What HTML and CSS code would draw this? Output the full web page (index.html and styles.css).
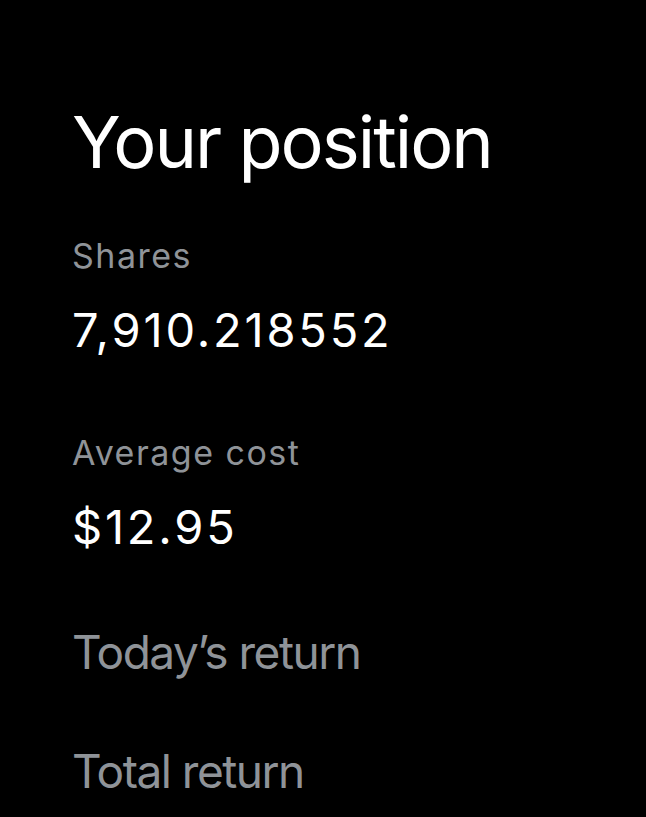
FILE: index.html
```html
<!DOCTYPE html>
<html lang="en">
<head>
<meta charset="utf-8">
<title>Your position</title>
<link rel="stylesheet" href="styles.css">
</head>
<body>
<main class="position">
  <h1 class="title">Your position</h1>
  <section class="stat">
    <div class="stat-label">Shares</div>
    <div class="stat-value">7,910.218552</div>
  </section>
  <section class="stat">
    <div class="stat-label">Average cost</div>
    <div class="stat-value">$12.95</div>
  </section>
  <div class="row row-today">Today’s return</div>
  <div class="row row-total">Total return</div>
</main>
</body>
</html>
```
FILE: styles.css
```css
html, body {
  margin: 0;
  padding: 0;
  background: #000;
}
body {
  font-family: Inter, "Liberation Sans", sans-serif;
  color: #fff;
  -webkit-font-smoothing: antialiased;
}
.position {
  padding: 102px 0 0 72px;
  display: flex;
  flex-direction: column;
}
.title {
  margin: 0;
  font-size: 72px;
  line-height: 80px;
  font-weight: 400;
  letter-spacing: -2px;
}
.stat {
  display: flex;
  flex-direction: column;
  gap: 26px;
  margin-top: 54px;
}
.stat + .stat {
  margin-top: 75px;
}
.stat-label {
  font-size: 34px;
  line-height: 40px;
  letter-spacing: 1.5px;
  color: #8f9398;
}
.stat-value {
  font-size: 47px;
  line-height: 56px;
  letter-spacing: 2.8px;
}
.row {
  font-size: 46px;
  line-height: 56px;
  letter-spacing: -1.5px;
  color: #8f9398;
}
.row-today {
  margin-top: 69px;
}
.row-total {
  margin-top: 63px;
}
```
